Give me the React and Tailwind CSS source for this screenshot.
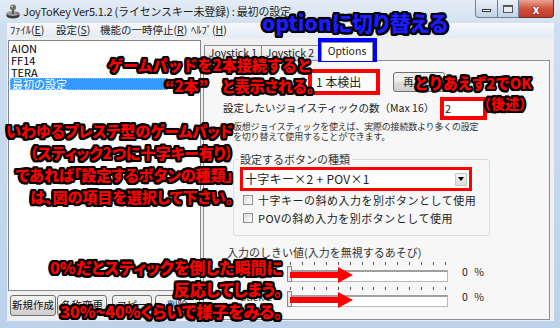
const outline =
  "[text-shadow:2.2px_0_0_#000,-2.2px_0_0_#000,0_2.2px_0_#000,0_-2.2px_0_#000,1.6px_1.6px_0_#000,-1.6px_-1.6px_0_#000,1.6px_-1.6px_0_#000,-1.6px_1.6px_0_#000,2px_1px_0_#000,-2px_1px_0_#000,2px_-1px_0_#000,-2px_-1px_0_#000,1px_2px_0_#000,-1px_2px_0_#000,1px_-2px_0_#000,-1px_-2px_0_#000,0_0_3px_#000]"
const ann = `absolute whitespace-nowrap font-black leading-none ${outline}`
const palt = "[font-feature-settings:'palt']"
const winBtn =
  "flex items-center justify-center border border-[#707070] rounded-[3px] bg-[linear-gradient(#f2f2f2,#ebebeb_50%,#dddddd_50%,#cfcfcf)] text-[10.5px] leading-none"

function JoyIcon() {
  return (
    <svg width="14" height="15" viewBox="0 0 14 15">
      <ellipse cx="7" cy="12" rx="6.5" ry="2.6" fill="#3a3a3a" />
      <rect x="0.5" y="9.5" width="13" height="2.5" fill="#3a3a3a" />
      <ellipse cx="7" cy="9.5" rx="6.5" ry="2.6" fill="#9a9a9a" />
      <rect x="6" y="4" width="2" height="6" fill="#555" />
      <circle cx="7" cy="3.6" r="3" fill="#6e6e6e" />
      <circle cx="6" cy="2.6" r="1" fill="#cfcfcf" />
      <circle cx="11.5" cy="9.2" r="1" fill="#d33" />
    </svg>
  )
}

function Checkbox({ label }) {
  return (
    <div className="flex h-[18px] items-center">
      <span className="ml-[9px] h-[10px] w-[10px] border border-[#8e8f8f] bg-linear-to-br from-[#dcdcdc] to-white" />
      <span className="ml-[5px] text-[11px] leading-none tracking-[0.5px] text-[#222]">{label}</span>
    </div>
  )
}

function Slider({ label }) {
  const ticks = Array.from({ length: 14 })
  return (
    <div className="flex h-[25px] items-center">
      <span className="ml-[36px] w-[48px] text-[10.5px] leading-none text-[#333]">{label}</span>
      <div className="relative h-[24px] w-[160px]">
        <div className="flex justify-between px-[2px] pt-[1px]">
          {ticks.map((_, i) => (
            <span key={i} className="h-[3px] w-px bg-[#555]" />
          ))}
        </div>
        <div className="mt-[5px] h-[12px] border border-[#b8b8b8] border-t-2 border-t-[#a0a0a0] bg-white" />
        <div className="absolute left-[-1px] top-[5px] h-[16px] w-[5px] border border-[#8a8a8a] bg-[#e8e8e8]" />
        <svg className="absolute left-[2px] top-[6px]" width="64" height="16" viewBox="0 0 64 16">
          <path d="M0 5H48V0L63 8L48 16V11H0Z" fill="#ff0000" />
        </svg>
      </div>
      <span className="ml-[14px] text-[10.5px] leading-none tracking-[2px] text-[#222]">0 %</span>
    </div>
  )
}

export default function App() {
  return (
    <div className="relative h-[328px] w-[560px] overflow-hidden bg-linear-to-b from-[#cfdff0] to-[#bcd2ea] font-['Noto_Sans_CJK_JP',sans-serif] text-black">
      {/* title bar */}
      <div className="flex h-[23px] items-start bg-linear-to-b from-[#e4edf6] to-[#d3e1ef]">
        <div className="ml-[6px] mt-[4px]">
          <JoyIcon />
        </div>
        <span className="ml-[3px] mt-[5px] text-[11px] leading-[13px] tracking-[-0.2px] text-[#1e1e1e]">
          JoyToKey Ver5.1.2 (ライセンスキー未登録) : 最初の設定
        </span>
        <div className="ml-auto mr-[6px] flex">
          <div className="flex h-[18px] w-[23px] items-end justify-center rounded-bl-[4px] border border-t-0 border-[#6f819a] bg-linear-to-b from-[#e9f0f8] to-[#c2d3e6] pb-[5px]">
            <span className="h-[3px] w-[9px] border border-[#333] bg-white" />
          </div>
          <div className="flex h-[18px] w-[21px] items-center justify-center border border-l-0 border-t-0 border-[#6f819a] bg-linear-to-b from-[#e9f0f8] to-[#c2d3e6]">
            <span className="h-[8px] w-[10px] border border-[#555] border-t-2 bg-white/40" />
          </div>
          <div className="flex h-[18px] w-[35px] items-center justify-center rounded-br-[4px] border border-l-0 border-t-0 border-[#6a2a22] bg-linear-to-b from-[#e8a493] via-[#d1533c] to-[#c0392b]">
            <span className="text-[12px] font-bold leading-none text-white [text-shadow:0_0_2px_#400]">x</span>
          </div>
        </div>
      </div>

      {/* client */}
      <div className="ml-[7px] flex h-[298px] w-[547px] flex-col">
        {/* menu */}
        <div className="flex h-[15px] items-center bg-linear-to-b from-[#f7f9fc] to-[#e4ebf4] text-[10.5px] leading-none text-[#222]">
          <span className="ml-[3px] w-[46px]">ﾌｧｲﾙ(<u>E</u>)</span>
          <span className="w-[44px]">設定(<u>S</u>)</span>
          <span className="w-[91px]">機能の一時停止(<u>R</u>)</span>
          <span>ﾍﾙﾌﾟ(<u>H</u>)</span>
        </div>

        <div className="flex h-[283px] bg-[#f0f0f0]">
          {/* left column */}
          <div className="flex w-[196px] flex-col pl-[1px] pt-[2px]">
            <div className="h-[251px] w-[193px] border border-[#828790] bg-white pl-[1px] pt-[1px] text-[11px] leading-[12px]">
              <div className="h-[12px] pl-[1px]">AION</div>
              <div className="h-[12px] pl-[1px]">FF14</div>
              <div className="h-[12px] pl-[1px]">TERA</div>
              <div className="h-[12px] w-[158px] border border-dotted border-[#9fc6ef] bg-[#3399ff] pl-px text-white leading-[10px]">
                最初の設定
              </div>
            </div>
            <div className="mt-[4px] flex pl-[2px] text-[#111]">
              <div className={`${winBtn} h-[21px] w-[46px]`}>新規作成</div>
              <div className={`${winBtn} ml-[1px] h-[21px] w-[50px]`}>名称変更</div>
              <div className={`${winBtn} ml-[5px] h-[21px] w-[40px]`}>コピー</div>
              <div className={`${winBtn} ml-[3px] h-[21px] w-[45px]`}>削除</div>
            </div>
          </div>

          {/* right column */}
          <div className="flex flex-col">
            <div className="mt-[3px] flex h-[19px] items-end text-[10.5px] leading-none text-[#222]">
              <div className="ml-[1px] flex h-[15px] w-[58px] items-center justify-center border border-b-0 border-[#898c95] bg-linear-to-b from-[#f6f6f6] to-[#e1e1e1]">
                Joystick 1
              </div>
              <div className="flex h-[15px] w-[57px] items-center justify-center border border-b-0 border-l-0 border-[#898c95] bg-linear-to-b from-[#f6f6f6] to-[#e1e1e1]">
                Joystick 2
              </div>
              <div className="relative top-px z-10 ml-[2px] flex h-[19px] w-[52px] items-center justify-center border border-b-0 border-[#898c95] bg-white pb-[2px]">
                Options
              </div>
            </div>

            <div className="flex h-[260px] w-[347px] flex-col border border-[#898c95] bg-[#f7f7f7] text-[#222]">
              {/* row A */}
              <div className="mt-[8px] flex h-[26px] items-center">
                <span className="ml-[94px] w-[10px] text-[10.5px] leading-none">ク</span>
                <div className="flex h-[26px] w-[72px] items-center border-4 border-[#ff0000] bg-white pl-[4px] text-[12px] leading-none">
                  1 本検出
                </div>
                <div className={`${winBtn} ml-[13px] h-[20px] w-[52px]`}>再検出</div>
              </div>
              {/* row B */}
              <div className="mt-[2px] flex h-[23px] items-center">
                <span className="ml-[19px] w-[217px] text-[10.5px] leading-none">設定したいジョイスティックの数（Max 16）</span>
                <div className="flex h-[23px] w-[47px] items-center border-4 border-[#ff0000] bg-white pl-[1px] text-[11px] leading-none">
                  2
                </div>
              </div>
              {/* note */}
              <div className="ml-[29px] mt-[2px] text-[9px] leading-[10px] tracking-[-0.2px] text-[#333]">
                仮想ジョイスティックを使えば、実際の接続数より多くの設定
                <br />
                を切り替えて使用することができます。
              </div>
              {/* group */}
              <fieldset className="ml-[29px] mt-[11px] w-[257px] rounded-[3px] border border-[#d5dfe5] pb-[8px]">
                <legend className="ml-[4px] px-[2px] text-[11px] leading-[12px] text-[#333]">設定するボタンの種類</legend>
                <div className="ml-[6px] mt-[2px] flex h-[24px] w-[232px] items-center border-[3px] border-[#ff0000] bg-white pl-[2px]">
                  <span className="flex-1 text-[12px] leading-none tracking-[0.3px]">十字キー×2 + POV×1</span>
                  <span className="mr-[2px] flex h-[13px] w-[12px] items-center justify-center border border-[#c8c8c8] bg-linear-to-b from-[#f5f5f5] to-[#dcdcdc]">
                    <svg width="6" height="4" viewBox="0 0 6 4">
                      <path d="M0 0H6L3 4Z" fill="#000" />
                    </svg>
                  </span>
                </div>
                <Checkbox label="十字キーの斜め入力を別ボタンとして使用" />
                <Checkbox label="POVの斜め入力を別ボタンとして使用" />
              </fieldset>
              {/* threshold */}
              <div className="ml-[23px] mt-[10px] text-[11px] leading-[12px] text-[#333]">入力のしきい値(入力を無視するあそび)</div>
              <div className="mt-[2px]">
                <Slider label="Stick 1" />
                <Slider label="Stick 2" />
              </div>
            </div>
          </div>
        </div>
      </div>

      {/* annotations */}
      <div className="absolute left-[318px] top-[38px] h-[24px] w-[59px] border-4 border-[#0000ff]" />
      <div className={`${ann} ${palt} left-[262px] top-[12px] text-[21px] text-[#1c1cff]`}>optionに切り替える</div>
      <div className={`${ann} left-[108px] top-[57px] text-[15px] text-[#ff0000]`}>ゲームパッドを2本接続すると</div>
      <div className={`${ann} ${palt} left-[165px] top-[78px] text-[15px] text-[#ff0000]`}>“2本”</div>
      <div className={`${ann} ${palt} left-[222px] top-[78px] text-[15px] text-[#ff0000]`}>と表示される。</div>
      <div className={`${ann} left-[414px] top-[76px] text-[14.5px] text-[#ff0000]`}>とりあえず2でOK</div>
      <div className={`${ann} right-[27px] top-[96px] text-[14px] text-[#ff0000]`}>（後述）</div>
      <div className={`${ann} ${palt} right-[327px] top-[123px] flex flex-col items-end gap-[7px] text-[15px] text-[#ff0000]`}>
        <span>いわゆるプレステ型のゲームパッド</span>
        <span>（スティック2つに十字キー有り）</span>
        <span>であれば「設定するボタンの種類」</span>
        <span>は、図の項目を選択して下さい。</span>
      </div>
      <div className={`${ann} ${palt} right-[278px] top-[259px] flex flex-col items-end gap-[6px] text-[16px] text-[#ff0000]`}>
        <span>0%だとスティックを倒した瞬間に</span>
        <span>反応してしまう。</span>
        <span>30%~40%くらいで様子をみる。</span>
      </div>
    </div>
  )
}
